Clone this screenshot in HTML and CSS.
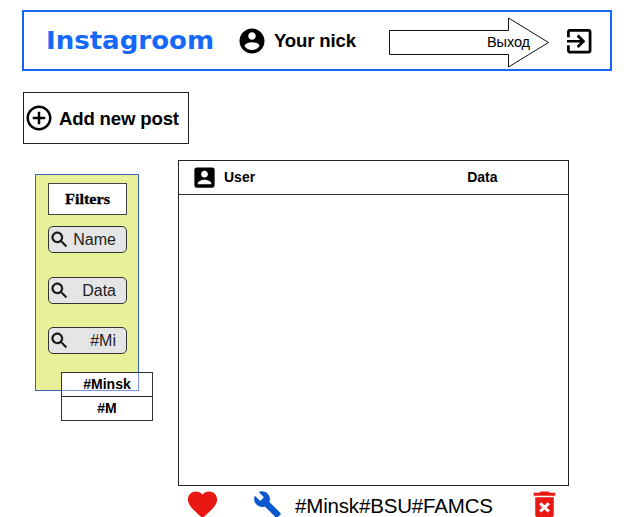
FILE: index.html
```html
<!DOCTYPE html>
<html lang="en">
<head>
<meta charset="utf-8">
<title>Instagroom</title>
<link rel="stylesheet" href="styles.css">
</head>
<body>
<header class="header">
  <svg class="logo" viewBox="0 0 172 40"><text x="0" y="26.500" textLength="168" lengthAdjust="spacingAndGlyphs">Instagroom</text></svg>
  <svg class="icon avatar" viewBox="0 0 24 24"><path d="M12 2C6.480 2 2 6.480 2 12s4.480 10 10 10 10-4.480 10-10S17.520 2 12 2zm0 3c1.660 0 3 1.340 3 3s-1.340 3-3 3-3-1.340-3-3 1.340-3 3-3zm0 14.200c-2.500 0-4.710-1.280-6-3.220.030-1.990 4-3.080 6-3.080 1.990 0 5.970 1.090 6 3.080-1.290 1.940-3.500 3.220-6 3.220z"/></svg>
  <svg class="nick" viewBox="0 0 88 30"><text x="0" y="21" textLength="82">Your nick</text></svg>
  <svg class="arrow" viewBox="0 0 162 52"><path d="M1.500 14.500H120.500V2L160.500 26.500L120.500 51V38.500H1.500Z"/><text x="99" y="31" textLength="43">Выход</text></svg>
  <svg class="icon exit" viewBox="0 0 24 24"><path d="M10.090 15.590L11.500 17l5-5-5-5-1.410 1.410L12.670 11H3v2h9.670l-2.580 2.590zM19 3H5c-1.110 0-2 .9-2 2v4h2V5h14v14H5v-4H3v4c0 1.100.890 2 2 2h14c1.100 0 2-.9 2-2V5c0-1.100-.9-2-2-2z"/></svg>
</header>
<button class="add">
  <svg class="icon plus" viewBox="0 0 24 24"><path d="M13 7h-2v4H7v2h4v4h2v-4h4v-2h-4V7zm-1-5C6.480 2 2 6.480 2 12s4.480 10 10 10 10-4.480 10-10S17.520 2 12 2zm0 18c-4.410 0-8-3.590-8-8s3.590-8 8-8 8 3.590 8 8-3.590 8-8 8z"/></svg>
  <svg class="addtext" viewBox="0 0 124 30"><text x="0" y="22" textLength="120">Add new post</text></svg>
</button>
<main class="main">
  <aside class="filters">
    <div class="title"><svg viewBox="0 0 46 20"><text x="0" y="15" textLength="45" lengthAdjust="spacingAndGlyphs">Filters</text></svg></div>
    <div class="search"><svg viewBox="0 0 24 24"><path d="M15.500 14h-.79l-.28-.27C15.410 12.590 16 11.110 16 9.500 16 5.910 13.090 3 9.500 3S3 5.910 3 9.500 5.910 16 9.500 16c1.610 0 3.090-.59 4.230-1.570l.27.280v.79l5 4.990L20.490 19l-4.990-5zm-6 0C7.010 14 5 11.990 5 9.500S7.010 5 9.500 5 14 7.010 14 9.500 11.990 14 9.500 14z"/></svg><span>Name</span></div>
    <div class="search"><svg viewBox="0 0 24 24"><path d="M15.500 14h-.79l-.28-.27C15.410 12.590 16 11.110 16 9.500 16 5.910 13.090 3 9.500 3S3 5.910 3 9.500 5.910 16 9.500 16c1.610 0 3.090-.59 4.230-1.570l.27.280v.79l5 4.990L20.490 19l-4.990-5zm-6 0C7.010 14 5 11.990 5 9.500S7.010 5 9.500 5 14 7.010 14 9.500 11.990 14 9.500 14z"/></svg><span>Data</span></div>
    <div class="search"><svg viewBox="0 0 24 24"><path d="M15.500 14h-.79l-.28-.27C15.410 12.590 16 11.110 16 9.500 16 5.910 13.090 3 9.500 3S3 5.910 3 9.500 5.910 16 9.500 16c1.610 0 3.090-.59 4.230-1.570l.27.280v.79l5 4.990L20.490 19l-4.990-5zm-6 0C7.010 14 5 11.990 5 9.500S7.010 5 9.500 5 14 7.010 14 9.500 11.990 14 9.500 14z"/></svg><span>#Mi</span></div>
    <div class="menu"><div>#Minsk</div><div>#M</div></div>
    <div class="outline"></div>
  </aside>
  <section class="feed">
    <article class="post">
      <div class="posthead">
        <svg class="userbox" viewBox="0 0 24 24"><path d="M3 5v14c0 1.100.890 2 2 2h14c1.100 0 2-.9 2-2V5c0-1.100-.9-2-2-2H5c-1.110 0-2 .9-2 2zm12 4c0 1.660-1.340 3-3 3s-3-1.340-3-3 1.340-3 3-3 3 1.340 3 3zm-9 8c0-2 4-3.100 6-3.100s6 1.100 6 3.100v1H6v-1z"/></svg>
        <span>User</span><span class="date">Data</span>
      </div>
    </article>
    <div class="actions">
      <svg class="heart" viewBox="0 0 24 24"><path d="M12 21.350l-1.450-1.320C5.400 15.360 2 12.280 2 8.500 2 5.420 4.420 3 7.500 3c1.740 0 3.410.810 4.500 2.090C13.090 3.810 14.760 3 16.500 3 19.580 3 22 5.420 22 8.500c0 3.780-3.400 6.860-8.550 11.540L12 21.350z"/></svg>
      <svg class="wrench" viewBox="0 0 24 24"><path d="M22.700 19l-9.100-9.100c.9-2.300.4-5-1.500-6.900-2-2-5-2.400-7.400-1.300L9 6 6 9 1.600 4.700C.4 7.100.9 10.100 2.900 12.100c1.900 1.900 4.600 2.400 6.900 1.500l9.100 9.100c.4.4 1 .4 1.400 0l2.300-2.300c.5-.4.5-1.100.1-1.400z"/></svg>
      <svg class="tags" viewBox="0 0 204 30"><text x="0" y="23" textLength="198">#Minsk#BSU#FAMCS</text></svg>
      <svg class="trash" viewBox="0 0 24 24" preserveAspectRatio="none"><path d="M6 19c0 1.100.9 2 2 2h8c1.100 0 2-.9 2-2V7H6v12zm2.460-7.120l1.410-1.410L12 12.590l2.120-2.120 1.410 1.410L13.410 14l2.120 2.120-1.410 1.410L12 15.410l-2.120 2.120-1.410-1.410L10.590 14l-2.130-2.120zM15.500 4l-1-1h-5l-1 1H5v2h14V4z"/></svg>
    </div>
  </section>
</main>
</body>
</html>
```
FILE: styles.css
```css
* { box-sizing: border-box; }
body {
  margin: 0;
  height: 517px;
  padding: 10px 12px 0 22px;
  overflow: hidden;
  background: #fff;
  color: #000;
  font-family: "Liberation Sans", Arial, sans-serif;
}
svg { display: block; flex: none; }
svg text { white-space: pre; }

.header {
  display: flex;
  align-items: center;
  width: 590px;
  height: 61px;
  border: 2px solid #1765f5;
}
.logo { width: 172px; height: 40px; margin: 3px 0 0 22px; fill: #1468fa; font: bold 25px "DejaVu Sans", sans-serif; }
.icon { width: 30px; height: 30px; }
.avatar { margin-left: 19px; margin-top: 1px; }
.nick { width: 88px; height: 30px; margin-left: 7px; font-size: 18.600px; font-weight: bold; }
.arrow { width: 162px; height: 52px; margin: 2px 0 0 26px; font-size: 14.500px; }
.arrow path { fill: none; stroke: #111; }
.exit { width: 32.500px; height: 32.500px; margin-left: 13px; margin-top: 1px; }

.add {
  display: flex;
  align-items: center;
  width: 166px;
  height: 52px;
  margin: 21px 0 0 1px;
  padding: 0;
  border: 1px solid #222;
  background: #fff;
}
.plus { margin-left: -.5px; margin-top: -1px; }
.addtext { width: 124px; height: 30px; margin-left: 5px; font: bold 18.600px "Liberation Sans", Arial, sans-serif; }

.main { display: flex; align-items: flex-start; margin-top: 16px; }
.filters {
  position: relative;
  width: 104px;
  height: 217px;
  margin: 14px 0 0 13px;
  padding: 8px 11px 0 12px;
  border: 1.500px solid #3b61b5;
  background: #e8f09a;
}
.title {
  display: flex;
  justify-content: center;
  height: 32px;
  padding-top: 5px;
  border: 1px solid #444;
  background: #fff;
  font: bold 15px "Liberation Serif", serif;
}
.title svg { width: 46px; height: 20px; stroke: #000; stroke-width: .3; }
.search {
  display: flex;
  align-items: center;
  justify-content: space-between;
  height: 27px;
  margin-top: 23.500px;
  padding: 1px 10px 0 0;
  border: 1px solid #333;
  border-radius: 5px;
  background: #e5e5e5;
  color: #222;
  font-size: 16px;
}
.title + .search { margin-top: 11px; }
.search svg { width: 21px; height: 21px; margin-top: -1px; fill: #111; stroke: #111; stroke-width: .4; }
.menu {
  position: absolute;
  left: 25px;
  top: 197px;
  width: 92px;
  border: 1px solid #333;
  background: #fff;
  text-align: center;
  font-size: 14px;
  font-weight: bold;
  line-height: 23px;
}
.menu div + div { border-top: 1px solid #222; }
.outline {
  position: absolute;
  left: 26px;
  top: 198px;
  width: 77px;
  height: 18px;
  border: solid rgba(65, 105, 225, .7);
  border-width: 0 1px 1px 0;
}

.feed { margin-left: 39px; }
.post { width: 391px; height: 326px; border: 1px solid #222; }
.posthead {
  display: flex;
  align-items: center;
  height: 34px;
  padding-left: 12px;
  border-bottom: 1px solid #333;
  font-size: 14px;
  font-weight: bold;
}
.posthead span { margin-top: -2px; }
.userbox { width: 27px; height: 27px; margin-right: 6px; }
.posthead .date { margin-left: 212px; }
.actions { display: flex; align-items: flex-start; }
.heart { width: 35px; height: 35px; margin: 1px 0 0 7px; fill: #e91812; }
.wrench { width: 29px; height: 29px; margin: 4px 0 0 33px; fill: #0b57d0; }
.tags { width: 204px; height: 30px; margin: 4px 0 0 13px; font-size: 20.500px; }
.trash { width: 37px; height: 35px; margin: 1px 0 0 27px; fill: #e91812; }
```
